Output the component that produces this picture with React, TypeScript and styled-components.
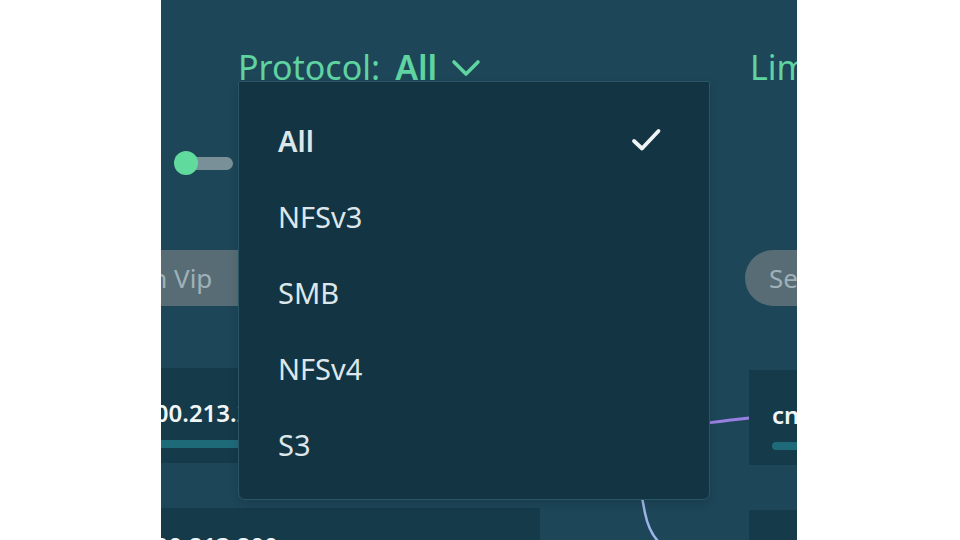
import React from "react";
import styled, { createGlobalStyle } from "styled-components";

const GlobalStyle = createGlobalStyle`
  html, body { margin: 0; padding: 0; background: #ffffff; }
  body { font-family: "Noto Sans", "Open Sans", sans-serif; }
  * { box-sizing: border-box; }
`;

const Stage = styled.div`
  width: 960px;
  height: 540px;
  display: flex;
  padding-left: 161px;
  background: #ffffff;
  overflow: hidden;
`;

const Panel = styled.div`
  position: relative;
  flex: 0 0 636px;
  height: 540px;
  background: #1d4658;
  overflow: hidden;
  display: flex;
  flex-direction: column;
`;

const FilterBar = styled.div`
  display: flex;
  flex: none;
  height: 88px;
  padding: 47px 0 0 77px;
  position: relative;
  z-index: 3;
`;

const FilterSlot = styled.div<{ $width: number }>`
  position: relative;
  flex: 0 0 ${(p) => p.$width}px;
`;

const FilterButton = styled.button`
  display: inline-flex;
  align-items: center;
  padding: 0;
  border: 0;
  background: none;
  color: #5fd3a0;
  font-family: inherit;
  font-size: 34px;
  line-height: 40px;
  white-space: nowrap;
  cursor: pointer;
`;

const FilterValue = styled.strong`
  font-weight: 600;
  margin-left: 15px;
`;

const Chevron = styled.svg`
  margin-left: 14px;
  margin-top: 2px;
`;

const Menu = styled.ul`
  position: absolute;
  top: 34px;
  left: 0;
  width: 472px;
  margin: 0;
  padding: 20px 0 17px;
  list-style: none;
  background: #133443;
  border: 1px solid #2b5667;
  border-radius: 2px 2px 7px 7px;
  box-shadow: 0 4px 10px rgba(0, 0, 0, 0.12);
`;

const MenuItem = styled.li<{ $selected?: boolean }>`
  display: flex;
  align-items: center;
  justify-content: space-between;
  height: 76px;
  padding: 0 47px 0 39px;
  color: #dde7eb;
  font-size: 29px;
  font-weight: ${(p) => (p.$selected ? 600 : 400)};
`;

const Body = styled.div`
  display: flex;
  flex: 1;
  min-height: 0;
`;

const LeftColumn = styled.div`
  flex: 0 0 480px;
  margin-left: -100px;
  display: flex;
  flex-direction: column;
  padding-top: 63px;
`;

const ToggleRow = styled.div`
  display: flex;
  align-items: center;
  height: 24px;
  padding-left: 113px;
`;

const Knob = styled.span`
  position: relative;
  z-index: 1;
  width: 24px;
  height: 24px;
  border-radius: 50%;
  background: #60db9d;
`;

const Track = styled.span`
  width: 47px;
  height: 13px;
  margin-left: -12px;
  border-radius: 7px;
  background: #7a9099;
`;

const SearchField = styled.div<{ $top: number; $width: number }>`
  margin-top: ${(p) => p.$top}px;
  width: ${(p) => p.$width}px;
  height: 56px;
  flex: none;
  display: flex;
  align-items: center;
  padding-left: 24px;
  border-radius: 28px;
  background: #586c75;
  color: #9fb1b8;
  font-size: 26px;
  white-space: nowrap;
`;

const Card = styled.div<{ $top: number; $indent: number; $width: number; $padTop?: number; $shift?: number }>`
  margin-top: ${(p) => p.$top}px;
  margin-left: ${(p) => p.$shift ?? 0}px;
  width: ${(p) => p.$width}px;
  flex: none;
  padding: ${(p) => p.$padTop ?? 31}px 0 15px ${(p) => p.$indent}px;
  background: #153a4a;
`;

const CardTitle = styled.div`
  color: #f1f5f6;
  font-size: 24px;
  font-weight: 600;
  line-height: 28px;
  white-space: nowrap;
`;

const UsageBar = styled.div`
  margin-top: 13px;
  height: 8px;
  width: 180px;
  border-radius: 4px;
  background: #1f6a79;
`;

const Connectors = styled.div`
  flex: 0 0 204px;
  position: relative;
  z-index: 1;
`;

const RightColumn = styled.div`
  flex: 0 0 220px;
  display: flex;
  flex-direction: column;
  padding-top: 162px;
`;

const items = ["All", "NFSv3", "SMB", "NFSv4", "S3"];

export default function App() {
  return (
    <>
      <GlobalStyle />
      <Stage>
        <Panel>
          <FilterBar>
            <FilterSlot $width={512}>
              <FilterButton>
                Protocol:
                <FilterValue>All</FilterValue>
                <Chevron width="30" height="18" viewBox="0 0 30 18">
                  <path d="M3 3 L15 15 L27 3" fill="none" stroke="#5fd3a0" strokeWidth="3.6" strokeLinecap="round" strokeLinejoin="round" />
                </Chevron>
              </FilterButton>
              <Menu>
                {items.map((it, i) => (
                  <MenuItem key={it} $selected={i === 0}>
                    {it}
                    {i === 0 && (
                      <svg width="32" height="26" viewBox="0 0 32 26">
                        <path d="M4 14 L12 21.5 L28.5 4" fill="none" stroke="#f0f4f5" strokeWidth="3.8" strokeLinecap="round" strokeLinejoin="round" />
                      </svg>
                    )}
                  </MenuItem>
                ))}
              </Menu>
            </FilterSlot>
            <FilterSlot $width={200}>
              <FilterButton>Limit: 10</FilterButton>
            </FilterSlot>
          </FilterBar>
          <Body>
            <LeftColumn>
              <ToggleRow>
                <Knob />
                <Track />
              </ToggleRow>
              <SearchField $top={75} $width={360}>Search Vip</SearchField>
              <Card $top={62} $indent={46} $width={479}>
                <CardTitle>10.100.213.25</CardTitle>
                <UsageBar />
              </Card>
              <Card $top={45} $indent={46} $width={479} $padTop={24}>
                <CardTitle>10.100.213.200</CardTitle>
                <UsageBar />
              </Card>
            </LeftColumn>
            <Connectors>
              <svg width="204" height="452" viewBox="0 0 204 452" style={{ overflow: "visible" }}>
                <path d="M0 345 C100 345 120 340 208 330" fill="none" stroke="#9b80e4" strokeWidth="3" />
                <path d="M0 325 C92 325 97 390 104 425 S128 462 170 480" fill="none" stroke="#9db3e8" strokeWidth="2.5" />
              </svg>
            </Connectors>
            <RightColumn>
              <SearchField $top={0} $width={240}>Search Node</SearchField>
              <Card $top={64} $indent={23} $width={240} $shift={4}>
                <CardTitle>cnode-01</CardTitle>
                <UsageBar />
              </Card>
              <Card $top={45} $indent={23} $width={240} $shift={4}>
                <CardTitle>cnode-02</CardTitle>
                <UsageBar />
              </Card>
            </RightColumn>
          </Body>
        </Panel>
      </Stage>
    </>
  );
}
